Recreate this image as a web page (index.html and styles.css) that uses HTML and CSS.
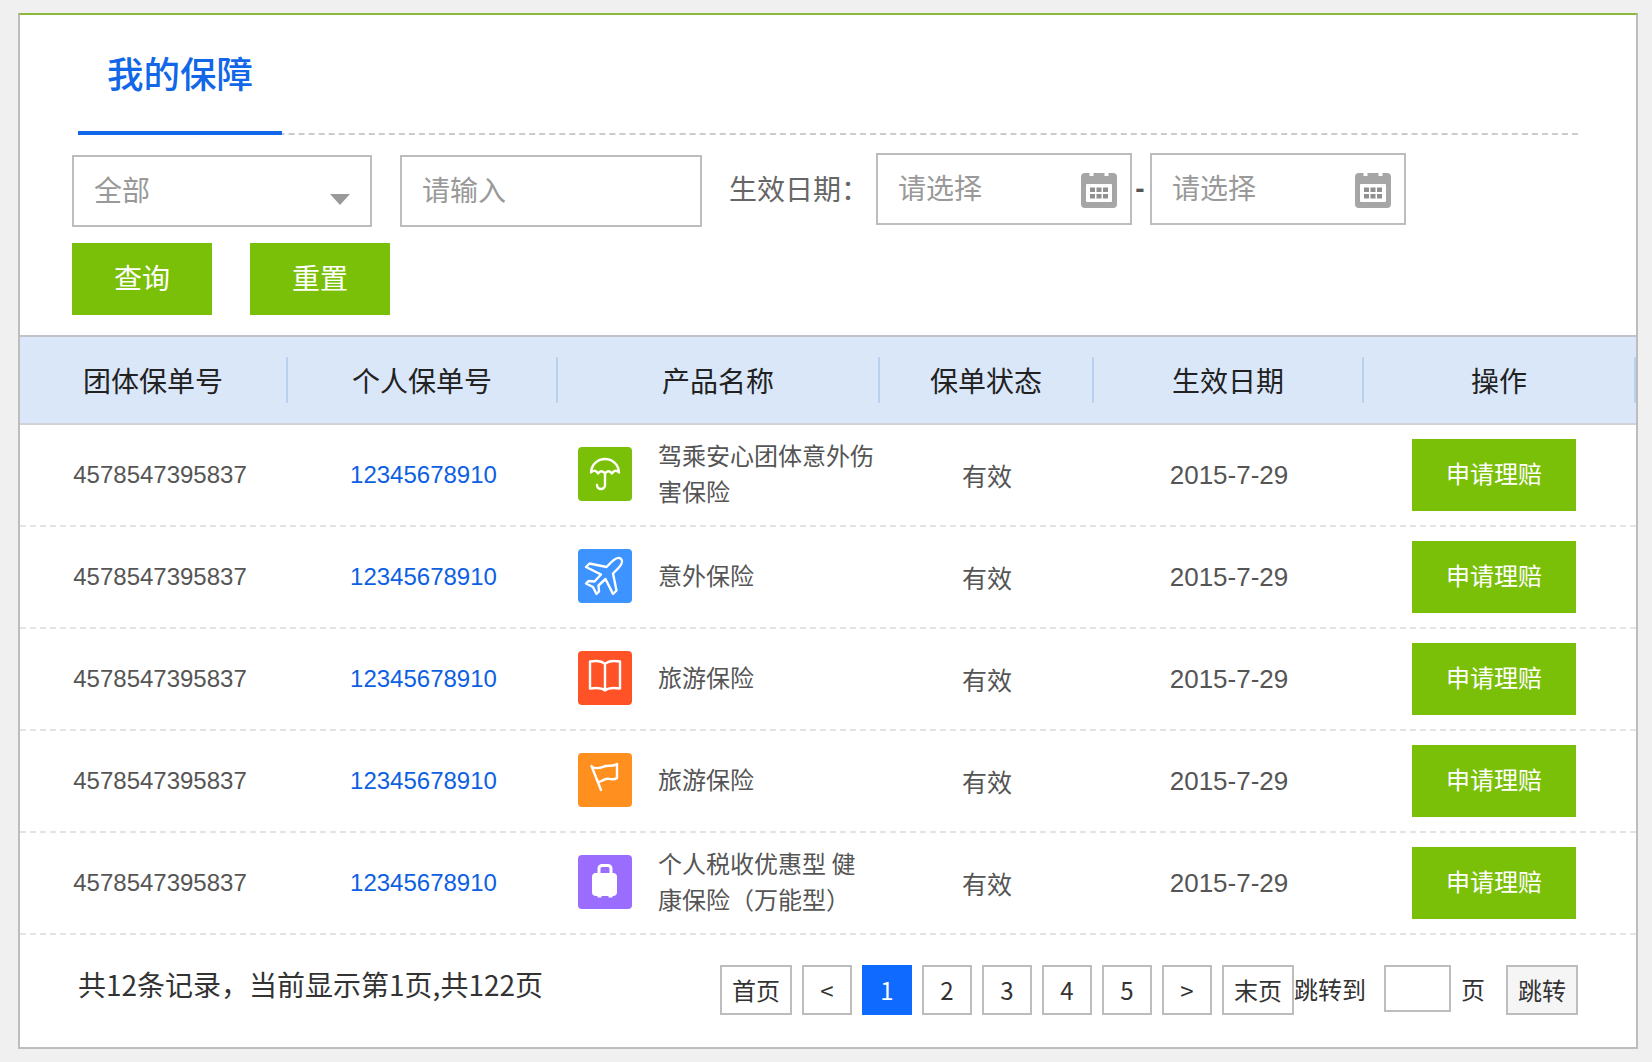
FILE: index.html
```html
<!DOCTYPE html>
<html lang="zh-CN">
<head>
<meta charset="utf-8">
<title>我的保障</title>
<link rel="stylesheet" href="styles.css">
</head>
<body>
<main class="card">
  <div class="tabs"><h1 class="tab">我的保障</h1></div>
  <section class="filters">
    <div class="filter-row">
      <div class="field field-select"><span>全部</span><i class="caret"></i></div>
      <div class="field field-input"><span>请输入</span></div>
      <span class="date-label">生效日期：</span>
      <div class="date-range">
        <div class="field field-date"><span>请选择</span>
          <svg class="cal" viewBox="0 0 36 36"><path fill="#a6a6a6" d="M4 1h4.500v3h4V1h11v3h4V1H32a4 4 0 0 1 4 4v27a4 4 0 0 1-4 4H4a4 4 0 0 1-4-4V5a4 4 0 0 1 4-4z"/><rect x="5" y="12" width="26" height="18" rx="1" fill="#fff"/><path fill="#8f8f8f" d="M9 15.500h5v4.500H9zM15.500 15.500h5v4.500h-5zM22 15.500h5v4.500h-5zM9 22h5v4.500H9zM15.500 22h5v4.500h-5zM22 22h5v4.500h-5z"/></svg>
        </div>
        <span class="dash">-</span>
        <div class="field field-date field-date-end"><span>请选择</span>
          <svg class="cal" viewBox="0 0 36 36"><path fill="#a6a6a6" d="M4 1h4.500v3h4V1h11v3h4V1H32a4 4 0 0 1 4 4v27a4 4 0 0 1-4 4H4a4 4 0 0 1-4-4V5a4 4 0 0 1 4-4z"/><rect x="5" y="12" width="26" height="18" rx="1" fill="#fff"/><path fill="#8f8f8f" d="M9 15.500h5v4.500H9zM15.500 15.500h5v4.500h-5zM22 15.500h5v4.500h-5zM9 22h5v4.500H9zM15.500 22h5v4.500h-5zM22 22h5v4.500h-5z"/></svg>
        </div>
      </div>
    </div>
    <div class="actions">
      <button class="btn">查询</button>
      <button class="btn">重置</button>
    </div>
  </section>

  <div class="thead row-grid">
    <div>团体保单号</div><div>个人保单号</div><div>产品名称</div><div>保单状态</div><div>生效日期</div><div>操作</div>
  </div>

  <div class="trow row-grid">
    <div class="num">4578547395837</div>
    <div class="link">12345678910</div>
    <div class="product"><span class="pic pic-green"><svg viewBox="0 0 54 54"><path class="line" d="M13 25.500C13.500 17 20 12 27 12S40.500 17 41 25.500C38.500 23 36 23 34 26.500 32 23.500 29 23.500 27 26.500 25 23.500 22 23.500 20 26.500 18 23 15.500 23 13 25.500zM27 26.500V38a4 4 0 0 1-8 0"/></svg></span><span class="pname">驾乘安心团体意外伤害保险</span></div>
    <div class="status">有效</div>
    <div class="date">2015-7-29</div>
    <div class="op"><button class="claim">申请理赔</button></div>
  </div>
  <div class="trow row-grid">
    <div class="num">4578547395837</div>
    <div class="link">12345678910</div>
    <div class="product"><span class="pic pic-blue"><svg viewBox="0 0 54 54"><path class="line" d="M43.500 10.500c1.500 2-.5 6-3.500 9l-5 5 3.500 17-3.500 3.500-7.500-15-7 6.500.5 6-2.500 2.500-3.500-7-7-3.500 2.500-2.500 6 .5 6.500-7-15-7.500 3.500-3.500 17 3.500 5-5c3-3 7-5 9-3.500z"/></svg></span><span class="pname">意外保险</span></div>
    <div class="status">有效</div>
    <div class="date">2015-7-29</div>
    <div class="op"><button class="claim">申请理赔</button></div>
  </div>
  <div class="trow row-grid">
    <div class="num">4578547395837</div>
    <div class="link">12345678910</div>
    <div class="product"><span class="pic pic-red"><svg viewBox="0 0 54 54"><path class="line" d="M27 13C24 10 18 9.500 12 10.500V37.500C18 36.500 24 37 27 39.500 30 37 36 36.500 42 37.500V10.500C36 9.500 30 10 27 13zV39.500"/></svg></span><span class="pname">旅游保险</span></div>
    <div class="status">有效</div>
    <div class="date">2015-7-29</div>
    <div class="op"><button class="claim">申请理赔</button></div>
  </div>
  <div class="trow row-grid">
    <div class="num">4578547395837</div>
    <div class="link">12345678910</div>
    <div class="product"><span class="pic pic-orange"><svg viewBox="0 0 54 54"><path class="line" d="M14 14C20 17 24 14 28 13S35 14 39 11V25C35 28 32 25 28 26 25 27 23 28.500 20.500 29M13.500 13L23 37"/></svg></span><span class="pname">旅游保险</span></div>
    <div class="status">有效</div>
    <div class="date">2015-7-29</div>
    <div class="op"><button class="claim">申请理赔</button></div>
  </div>
  <div class="trow row-grid">
    <div class="num">4578547395837</div>
    <div class="link">12345678910</div>
    <div class="product"><span class="pic pic-purple"><svg viewBox="0 0 54 54"><path class="solid" d="M19.500 18v-4.500A4.500 4.500 0 0 1 24 9h6a4.500 4.500 0 0 1 4.500 4.500V18h.500a4 4 0 0 1 4 4v15a4 4 0 0 1-4 4h-.500v1.500h-4V41h-7v1.500h-4V41H18a4 4 0 0 1-4-4V22a4 4 0 0 1 4-4zM22.500 18h9v-4.500a1.500 1.500 0 0 0-1.500-1.500h-6a1.500 1.500 0 0 0-1.500 1.500z"/></svg></span><span class="pname">个人税收优惠型 健康保险（万能型）</span></div>
    <div class="status">有效</div>
    <div class="date">2015-7-29</div>
    <div class="op"><button class="claim">申请理赔</button></div>
  </div>

  <footer class="foot">
    <p class="summary">共12条记录，当前显示第1页,共122页</p>
    <nav class="pager">
      <a class="pg pg-wide">首页</a>
      <a class="pg">&lt;</a>
      <a class="pg pg-on">1</a>
      <a class="pg">2</a>
      <a class="pg">3</a>
      <a class="pg">4</a>
      <a class="pg">5</a>
      <a class="pg">&gt;</a>
      <a class="pg pg-wide">末页</a>
      <span class="jump-label">跳转到</span>
      <span class="jump-input"></span>
      <span class="jump-unit">页</span>
      <a class="jump-btn">跳转</a>
    </nav>
  </footer>
</main>
</body>
</html>
```

FILE: styles.css
```css
* { box-sizing: border-box; }
html, body { margin: 0; padding: 0; }
body {
  background: #f0f0f0;
  padding: 13px 14px 13px 18px;
  font-family: "Noto Sans CJK SC", "Liberation Sans", sans-serif;
  color: #333;
}
.card {
  height: 1036px;
  background: #fff;
  border: 2px solid #bdbdbd;
  border-top-color: #8cb83c;
}
.tabs {
  margin: 0 58px;
  height: 120px;
  border-bottom: 2px dashed #ccc;
}
.tab {
  margin: 0;
  width: 204px;
  height: 120px;
  padding: 28px 0 0 29px;
  font-size: 36.500px;
  line-height: 60px;
  font-weight: 500;
  color: #1167e8;
  border-bottom: 4px solid #1167e8;
}
.filters { padding: 20px 0 20px 52px; }
.filter-row { display: flex; align-items: flex-start; }
.field {
  height: 72px;
  border: 2px solid #bdbdbd;
  display: flex;
  align-items: center;
  font-size: 28px;
  color: #999;
  padding-left: 20px;
}
.field > span { padding-bottom: 4px; }
.field-select { width: 300px; position: relative; }
.caret {
  position: absolute;
  right: 20px;
  top: 37px;
  border: 10px solid transparent;
  border-top: 11px solid #999;
  border-bottom: 0;
}
.field-input { width: 302px; margin-left: 28px; }
.date-label {
  margin-left: 27px;
  width: 147px;
  font-size: 28px;
  line-height: 66px;
  color: #666;
}
.date-range { display: flex; margin-top: -2px; }
.field-date { width: 256px; justify-content: space-between; padding-right: 13px; }
.field-date-end { padding-right: 13px; }
.cal { width: 36px; height: 36px; margin-top: 1px; }
.dash {
  width: 18px;
  padding-right: 2px;
  text-align: center;
  font: 700 28px/72px "Liberation Sans", sans-serif;
  color: #555;
}
.actions { display: flex; gap: 38px; margin-top: 16px; }
.btn {
  width: 140px;
  height: 72px;
  border: 0;
  padding: 0 0 4px;
  background: #7ac008;
  color: #fff;
  font: 28px "Noto Sans CJK SC", sans-serif;
}
.row-grid {
  display: grid;
  grid-template-columns: 268px 270px 322px 214px 270px 272px;
}
.thead {
  height: 90px;
  background: #dae7f9;
  border-top: 2px solid #bfc3c9;
  border-bottom: 2px solid #cfd3d8;
  align-items: center;
  font-size: 28px;
  color: #222;
  text-align: center;
}
.thead > div {
  height: 46px;
  line-height: 46px;
  border-right: 2px solid #b9d1f1;
}
.trow {
  height: 102px;
  border-bottom: 2px dashed #e4e4e4;
  align-items: center;
  text-align: center;
}
.num, .link {
  font-family: "Liberation Sans", sans-serif;
  font-size: 24px;
}
.num { color: #555; padding-left: 12px; }
.link { color: #0d5fe3; padding-left: 1px; }
.product {
  display: flex;
  align-items: center;
  padding: 0 0 2px 20px;
  text-align: left;
}
.pic {
  flex: none;
  width: 54px;
  height: 54px;
  border-radius: 4px;
  display: block;
  margin-right: 26px;
}
.pic svg { display: block; width: 54px; height: 54px; }
.pic-green { background: #7ac008; }
.pic-blue { background: #3d93ff; }
.pic-red { background: #ff5227; }
.pic-orange { background: #ff9020; }
.pic-purple { background: #9a6dff; }
.line { fill: none; stroke: #fff; stroke-width: 2.400; stroke-linejoin: round; stroke-linecap: round; }
.solid { fill: #fff; fill-rule: evenodd; }
.pname { width: 218px; margin-bottom: 2px; font-size: 24px; line-height: 36px; color: #555; }
.status { font-size: 25px; color: #555; }
.date { font: 26px "Liberation Sans", sans-serif; color: #555; }
.op { padding-left: 48px; text-align: left; }
.claim {
  display: block;
  width: 164px;
  height: 72px;
  border: 0;
  padding: 0 0 6px;
  background: #7ac008;
  color: #fff;
  font: 24px "Noto Sans CJK SC", sans-serif;
}
.foot {
  display: flex;
  justify-content: space-between;
  padding: 30px 58px 0 58px;
}
.summary { margin: 0; font-size: 28px; line-height: 38px; color: #333; }
.pager { display: flex; align-items: flex-start; font-size: 24px; color: #333; }
.pg {
  width: 50px;
  height: 50px;
  margin-right: 10px;
  padding-bottom: 2px;
  border: 2px solid #bdbdbd;
  display: flex;
  align-items: center;
  justify-content: center;
}
.pg-wide { width: 72px; }
.pg-wide:nth-child(9) { margin-right: 0; }
.pg-on { background: #0f6bff; border-color: #0f6bff; color: #fff; }
.jump-label { width: 72px; line-height: 48px; white-space: nowrap; }
.jump-input {
  width: 67px;
  height: 47px;
  margin-left: 18px;
  border: 2px solid #bdbdbd;
}
.jump-unit { margin-left: 10px; width: 24px; line-height: 48px; }
.jump-btn {
  width: 72px;
  height: 50px;
  margin-left: 21px;
  padding-bottom: 2px;
  border: 2px solid #bdbdbd;
  background: #f5f5f5;
  display: flex;
  align-items: center;
  justify-content: center;
}
```
